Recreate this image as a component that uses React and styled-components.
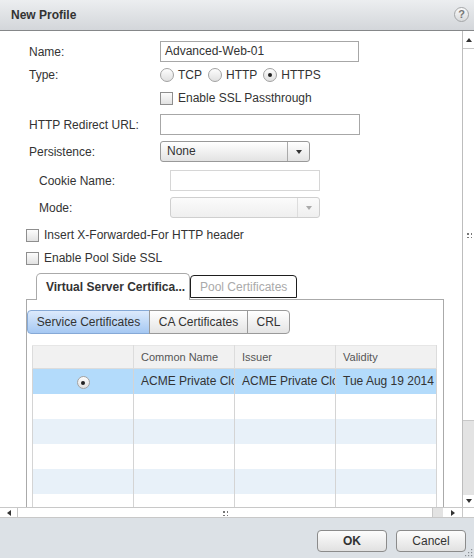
import styled, { createGlobalStyle, css } from "styled-components"

const GlobalStyle = createGlobalStyle`
  * { box-sizing: border-box; }
  body {
    margin: 0;
    font-family: "Liberation Sans", Arial, sans-serif;
    font-size: 12px;
    color: #333;
  }
`

const Dialog = styled.div`
  width: 474px;
  height: 558px;
  display: flex;
  flex-direction: column;
  background: #fff;
  position: relative;
  overflow: hidden;
`

const TitleBar = styled.div`
  height: 31px;
  flex-shrink: 0;
  display: flex;
  align-items: center;
  justify-content: space-between;
  padding: 0 5px 1px 11px;
  background: linear-gradient(#eceef0, #d3d6da);
  border-bottom: 1px solid #858789;
`

const Title = styled.span`
  font-weight: bold;
  font-size: 12px;
  color: #333;
`

const HelpIcon = styled.span`
  width: 15px;
  height: 15px;
  border-radius: 50%;
  border: 1px solid #a4a6a8;
  background: linear-gradient(#fafafa, #d9dbdd);
  color: #777;
  font-weight: bold;
  font-size: 11px;
  line-height: 13px;
  text-align: center;
`

const Body = styled.div`
  flex: 1;
  display: flex;
  min-height: 0;
`

const Viewport = styled.div`
  flex: 1;
  overflow: hidden;
  position: relative;
`

const Form = styled.div`
  width: 470px;
  padding: 10px 0 0 26px;
  display: flex;
  flex-direction: column;
`

const Row = styled.div`
  display: flex;
  align-items: center;
  height: ${p => p.$h || 21}px;
  margin-top: ${p => p.$gap || 0}px;
  padding-left: ${p => (p.$indent ? 10 : 0)}px;
`

const Label = styled.span`
  width: 134px;
  flex-shrink: 0;
  padding-left: 3px;
  color: #333;
`

const TextInput = styled.div`
  width: ${p => p.$w}px;
  height: 21px;
  border: 1px solid ${p => (p.$disabled ? "#d6d6d6" : "#a7a7a7")};
  background: #fff;
  padding-left: 4px;
  line-height: 19px;
  color: #333;
`

const Choice = styled.label`
  display: flex;
  align-items: center;
  margin-right: 6px;
`

const RadioDot = styled.span`
  width: 14px;
  height: 14px;
  border-radius: 50%;
  border: 1px solid #a2a2a2;
  background: linear-gradient(#fdfdfd, #e0e0e0);
  margin-right: 4px;
  display: flex;
  align-items: center;
  justify-content: center;
  &::after {
    content: "";
    width: 4px;
    height: 4px;
    border-radius: 50%;
    background: ${p => (p.$checked ? "#222" : "transparent")};
  }
`

const CheckBox = styled.span`
  width: 13px;
  height: 13px;
  border: 1px solid #8e8e8e;
  background: linear-gradient(#fcfcfc, #e2e2e2);
  margin-right: 5px;
  flex-shrink: 0;
`

const Select = styled.div`
  width: 150px;
  height: 21px;
  display: flex;
  border: 1px solid ${p => (p.$disabled ? "#cfcfcf" : "#999")};
  border-radius: 3px;
  background: ${p =>
    p.$disabled ? "linear-gradient(#fbfbfb, #efefef)" : "linear-gradient(#ffffff, #e3e3e3)"};
`

const SelectValue = styled.span`
  flex: 1;
  padding-left: 6px;
  line-height: 19px;
`

const SelectArrow = styled.span`
  width: 22px;
  border-left: 1px solid ${p => (p.$disabled ? "#ddd" : "#aaa")};
  display: flex;
  align-items: center;
  justify-content: center;
  &::after {
    content: "";
    border-left: 3px solid transparent;
    border-right: 3px solid transparent;
    border-top: 4px solid ${p => (p.$disabled ? "#aaa" : "#333")};
  }
`

const TabStrip = styled.div`
  display: flex;
  align-items: flex-end;
  margin-top: 4px;
  padding-left: 10px;
  height: 26px;
  position: relative;
  z-index: 1;
`

const Tab = styled.div`
  ${p =>
    p.$active
      ? css`
          width: 154px;
          height: 27px;
          border: 1px solid #aaa;
          border-bottom: none;
          border-radius: 5px 5px 0 0;
          background: #fff;
          font-weight: bold;
          color: #333;
          padding: 6px 0 0 9px;
          margin-bottom: -1px;
        `
      : css`
          width: 107px;
          height: 23px;
          border: 1px solid #1e1e1e;
          border-radius: 4px 4px 0 0;
          background: #fff;
          color: #aaa;
          padding: 4px 0 0 9px;
          margin-bottom: 1px;
        `}
`

const Panel = styled.div`
  width: 418px;
  height: 240px;
  border: 1px solid #aaa;
  padding-top: 10px;
`

const SegBar = styled.div`
  display: flex;
`

const SegButton = styled.div`
  width: ${p => p.$w}px;
  height: 24px;
  line-height: 22px;
  text-align: center;
  border: 1px solid #9a9a9a;
  margin-left: -1px;
  background: ${p =>
    p.$selected ? "linear-gradient(#dceafc, #a5c8f2)" : "linear-gradient(#ffffff, #e4e4e4)"};
  &:first-child {
    margin-left: 0;
    border-radius: 4px 0 0 4px;
    border-color: ${p => (p.$selected ? "#86a9d6" : "#9a9a9a")};
  }
  &:last-child {
    border-radius: 0 4px 4px 0;
  }
`

const Grid = styled.table`
  margin: 11px 0 0 5px;
  width: 405px;
  table-layout: fixed;
  border-collapse: collapse;
`

const HeadCell = styled.th`
  height: 23px;
  padding: 0 0 0 7px;
  text-align: left;
  font-weight: normal;
  font-size: 11px;
  color: #555;
  background: #f1f1f1;
  border: 1px solid #dcdcdc;
  border-top-color: #e6e6e6;
`

const BodyRow = styled.tr`
  height: 25px;
  background: ${p =>
    p.$selected ? "#b3dbfb" : p.$alt ? "#e8f1f9" : "#fff"};
`

const Cell = styled.td`
  padding: 0 0 0 7px;
  white-space: nowrap;
  overflow: hidden;
  text-overflow: clip;
  border-left: 1px solid #d4d4d4;
  border-right: 1px solid #d4d4d4;
  text-align: ${p => (p.$center ? "center" : "left")};
`

const CellRadio = styled(RadioDot)`
  display: inline-flex;
  width: 13px;
  height: 13px;
  margin: 3px 0 0 -7px;
`

const VScroll = styled.div`
  width: 12px;
  flex-shrink: 0;
  display: flex;
  flex-direction: column;
  border-left: 1px solid #bdbdbd;
`

const ArrowBox = styled.div`
  height: ${p => p.$h || 13}px;
  width: ${p => p.$w ? `${p.$w}px` : "auto"};
  flex-shrink: 0;
  display: flex;
  align-items: center;
  justify-content: center;
  background: #fff;
  ${p => p.$edge && `border-${p.$edge}: 1px solid #c8c8c8;`}
  &::after {
    content: "";
    ${p =>
      p.$dir === "up"
        ? "border-left: 3px solid transparent; border-right: 3px solid transparent; border-bottom: 4px solid #333;"
        : p.$dir === "down"
        ? "border-left: 3px solid transparent; border-right: 3px solid transparent; border-top: 4px solid #333;"
        : p.$dir === "left"
        ? "border-top: 3px solid transparent; border-bottom: 3px solid transparent; border-right: 4px solid #333;"
        : p.$dir === "right"
        ? "border-top: 3px solid transparent; border-bottom: 3px solid transparent; border-left: 4px solid #333;"
        : ""}
  }
`

const Thumb = styled.div`
  flex: 1;
  background: #fff;
  display: flex;
  align-items: center;
  justify-content: center;
  ${p => p.$edge && `border-${p.$edge}: 1px solid #c8c8c8;`}
`

const Grip = styled.span`
  width: 6px;
  height: 6px;
  background:
    radial-gradient(circle, #777 0.9px, transparent 1.1px) 0 0 / 4px 4px;
`

const Track = styled.div`
  ${p => (p.$vertical ? `height: ${p.$size}px;` : `width: ${p.$size}px;`)}
  flex-shrink: 0;
  background: #e3e3e3;
`

const HScroll = styled.div`
  height: 11px;
  flex-shrink: 0;
  display: flex;
  border-top: 1px solid #c8c8c8;
  border-bottom: 1px solid #c8c8c8;
`

const Corner = styled.div`
  width: 12px;
  background: #fff;
  border-left: 1px solid #c8c8c8;
`

const Footer = styled.div`
  height: 40px;
  flex-shrink: 0;
  background: #dce1e6;
  display: flex;
  justify-content: flex-end;
  gap: 9px;
  padding: 12px 8px 0 0;
`

const DialogButton = styled.button`
  width: 70px;
  height: 22px;
  border: 1px solid #8b8b8b;
  border-radius: 4px;
  background: linear-gradient(#fdfdfd, #e1e1e1);
  font-family: "Liberation Sans", Arial, sans-serif;
  font-size: 12px;
  color: #333;
  font-weight: ${p => (p.$primary ? "bold" : "normal")};
  padding: 0;
`

const ResizeGrip = styled.svg`
  position: absolute;
  right: 1px;
  bottom: 1px;
`

const rows = [
  { selected: true },
  {},
  { alt: true },
  {},
  { alt: true },
  {},
]

export default function App() {
  return (
    <>
      <GlobalStyle />
      <Dialog>
        <TitleBar>
          <Title>New Profile</Title>
          <HelpIcon>?</HelpIcon>
        </TitleBar>
        <Body>
          <Viewport>
            <Form>
              <Row>
                <Label>Name:</Label>
                <TextInput $w={199}>Advanced-Web-01</TextInput>
              </Row>
              <Row $h={22} $gap={2}>
                <Label>Type:</Label>
                <Choice><RadioDot />TCP</Choice>
                <Choice><RadioDot />HTTP</Choice>
                <Choice><RadioDot $checked />HTTPS</Choice>
              </Row>
              <Row $h={22} $gap={1}>
                <Label />
                <CheckBox />
                Enable SSL Passthrough
              </Row>
              <Row $gap={5}>
                <Label>HTTP Redirect URL:</Label>
                <TextInput $w={200} />
              </Row>
              <Row $gap={6}>
                <Label>Persistence:</Label>
                <Select>
                  <SelectValue>None</SelectValue>
                  <SelectArrow />
                </Select>
              </Row>
              <Row $gap={8} $indent>
                <Label>Cookie Name:</Label>
                <TextInput $w={150} $disabled />
              </Row>
              <Row $gap={6} $indent>
                <Label>Mode:</Label>
                <Select $disabled>
                  <SelectValue />
                  <SelectArrow $disabled />
                </Select>
              </Row>
              <Row $h={22} $gap={6}>
                <CheckBox />
                Insert X-Forwarded-For HTTP header
              </Row>
              <Row $h={22} $gap={1}>
                <CheckBox />
                Enable Pool Side SSL
              </Row>
              <TabStrip>
                <Tab $active>Virtual Server Certifica...</Tab>
                <Tab>Pool Certificates</Tab>
              </TabStrip>
              <Panel>
                <SegBar>
                  <SegButton $w={123} $selected>Service Certificates</SegButton>
                  <SegButton $w={99}>CA Certificates</SegButton>
                  <SegButton $w={43}>CRL</SegButton>
                </SegBar>
                <Grid>
                  <thead>
                    <tr>
                      <HeadCell style={{ width: 101 }} />
                      <HeadCell style={{ width: 101 }}>Common Name</HeadCell>
                      <HeadCell style={{ width: 101 }}>Issuer</HeadCell>
                      <HeadCell>Validity</HeadCell>
                    </tr>
                  </thead>
                  <tbody>
                    {rows.map((r, i) => (
                      <BodyRow key={i} $selected={r.selected} $alt={r.alt}>
                        <Cell $center>{r.selected && <CellRadio $checked />}</Cell>
                        <Cell>{r.selected && "ACME Private Cloud CA"}</Cell>
                        <Cell>{r.selected && "ACME Private Cloud CA"}</Cell>
                        <Cell>{r.selected && "Tue Aug 19 2014 10:00:00"}</Cell>
                      </BodyRow>
                    ))}
                  </tbody>
                </Grid>
              </Panel>
            </Form>
          </Viewport>
          <VScroll>
            <ArrowBox $h={18} $dir="up" $edge="bottom" />
            <Thumb $edge="bottom"><Grip /></Thumb>
            <Track $vertical $size={74} />
            <ArrowBox $h={12} $dir="down" />
          </VScroll>
        </Body>
        <HScroll>
          <ArrowBox $h={9} $w={18} $dir="left" $edge="right" />
          <Thumb $edge="right"><Grip /></Thumb>
          <Track $size={10} />
          <ArrowBox $h={9} $w={19} $dir="right" />
          <Corner />
        </HScroll>
        <Footer>
          <DialogButton $primary>OK</DialogButton>
          <DialogButton>Cancel</DialogButton>
        </Footer>
        <ResizeGrip width="10" height="10" viewBox="0 0 10 10">
          {[[8, 2], [8, 5], [5, 5], [8, 8], [5, 8], [2, 8]].map(([x, y]) => (
            <rect key={`${x}-${y}`} x={x} y={y} width="1.2" height="1.2" fill="#8a8f95" />
          ))}
        </ResizeGrip>
      </Dialog>
    </>
  )
}
